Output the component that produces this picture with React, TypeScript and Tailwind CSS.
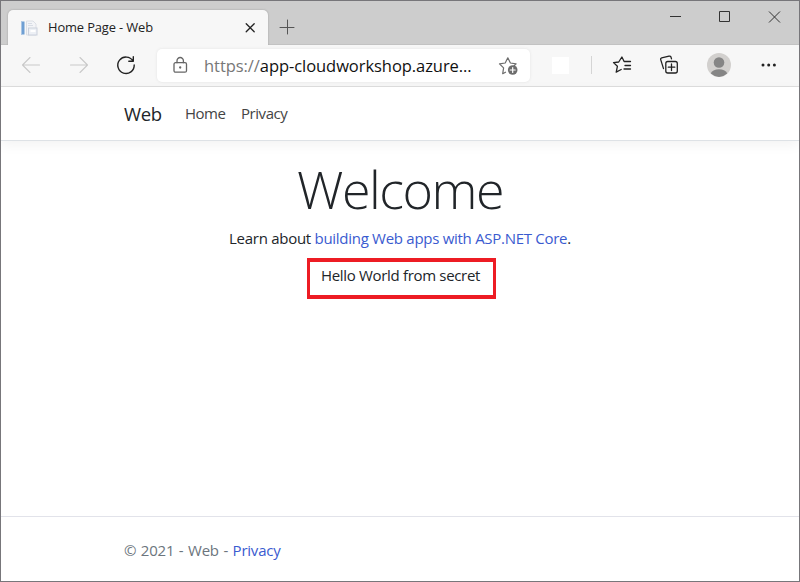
import type { ReactNode, SVGProps } from 'react';

function Icon({ children, ...props }: SVGProps<SVGSVGElement> & { children: ReactNode }) {
  return (
    <svg fill="none" stroke="currentColor" strokeWidth="1.3" strokeLinecap="round" strokeLinejoin="round" {...props}>
      {children}
    </svg>
  );
}

function TitleBar() {
  return (
    <div className="flex h-11 shrink-0 items-start bg-[#cdcdcd] pl-[7px] shadow-[inset_0_-1px_0_#c2c2c2]">
      <div className="mt-[9px] flex h-[35px] w-[260px] items-center rounded-t-[5px] bg-[#f7f7f7] pl-3 shadow-[0_0_2px_#999] [clip-path:inset(-3px_-3px_0_-3px)]">
        <svg width="18" height="18" viewBox="0 0 18 18" className="shrink-0">
          <rect x="1" y="2.500" width="3.500" height="13" fill="#6f9fd3" />
          <rect x="1" y="2.500" width="1" height="13" fill="#a9c6e5" />
          <path d="M6.500 2h6.500l3 3V16H6.500z" fill="#f3f4f7" stroke="#dcdfe5" />
          <path d="M8 4.500h4M8 6.500h5" stroke="#d8dde5" />
          <rect x="8.500" y="9" width="8.500" height="7" fill="#edf0f5" stroke="#cbd1dc" />
          <path d="M10.500 12h5" stroke="#fff" strokeWidth="2" />
        </svg>
        <span className="ml-[10px] w-[192px] shrink-0 text-[12.900px] tracking-[-0.120px] text-[#222]">Home Page - Web</span>
        <Icon width="20" height="20" viewBox="0 0 20 20" className="-mt-px shrink-0 text-[#222]">
          <path d="M6.200 6.700l8 8M14.200 6.700l-8 8" />
        </Icon>
      </div>
      <Icon width="18" height="18" viewBox="0 0 18 18" strokeWidth="1" className="ml-[10px] mt-[17px] text-[#555]">
        <path d="M2 9.500h14M9.500 2v14" />
      </Icon>
      <Icon width="115" height="18" viewBox="0 0 115 18" strokeWidth="1" className="ml-auto mr-[16px] mt-[7px] text-[#333]" strokeLinecap="butt" strokeLinejoin="miter">
        <path d="M2 8.500h11M51.500 3.500h10v10h-10zM101 3.500l11 11M112 3.500l-11 11" />
      </Icon>
    </div>
  );
}

function Toolbar() {
  return (
    <div className="flex h-[42px] shrink-0 items-center border-b border-[#dedede] bg-[#f7f7f7] pb-px pl-[18px]">
      <Icon width="24" height="24" viewBox="0 0 24 24" strokeWidth="1.100" className="text-[#c9c9c9]">
        <path d="M20.500 12H4M11 4.500L3.500 12l7.500 7.500" />
      </Icon>
      <Icon width="24" height="24" viewBox="0 0 24 24" strokeWidth="1.100" className="ml-6 text-[#c9c9c9]">
        <path d="M3.500 12H20M13 4.500l7.500 7.500-7.500 7.500" />
      </Icon>
      <Icon width="24" height="24" viewBox="0 0 24 24" strokeWidth="1.400" className="ml-[23px] text-[#222]">
        <path d="M19 8A8.200 8.200 0 1 0 20.200 12M19.300 3.800v4.500h-4.500" />
      </Icon>
      <div className="ml-[19px] mt-px flex h-[33px] w-[373px] shrink-0 items-center rounded-[5px] bg-white shadow-[0_0_3px_#e2e2e2]">
        <Icon width="18" height="20" viewBox="0 0 18 20" className="ml-[14px] shrink-0 text-[#666]">
          <rect x="3" y="6.700" width="12.500" height="9.500" rx="1.500" />
          <path d="M6 6.700V4.700a3.200 3.200 0 0 1 6.400 0v2" />
          <circle cx="9.200" cy="11.500" r=".5" fill="currentColor" />
        </Icon>
        <span className="ml-[15px] w-[294px] shrink-0 whitespace-nowrap pt-px text-[16.500px] tracking-[-0.060px] text-[#111]">
          <span className="text-[#777]">https://</span>app-cloudworkshop.azure...
        </span>
        <Icon width="22" height="22" viewBox="0 0 22 22" strokeWidth="1.200" className="shrink-0 text-[#6c6c6c]">
          <path d="M7.500 17.200l-2.800 1.500.9-5.800-4.100-4 5.700-.9L9.800 2.800 12.400 8l5.700.9-2 1.900" />
          <circle cx="14.700" cy="15" r="4.800" fill="currentColor" stroke="none" />
          <path d="M12.200 15h5M14.700 12.500v5" stroke="white" />
        </Icon>
      </div>
      <div className="ml-[22px] h-[17px] w-[17px] bg-white" />
      <div className="ml-[22px] h-[18px] w-px bg-[#d5d5d5]" />
      <Icon width="22" height="22" viewBox="0 0 22 22" className="ml-[20px] text-[#222]">
        <path d="M9.200 15.500l-5 2.600 1.200-5.800L1.500 8.600l5.200-.6L9.900 3l2.200 4.500h6.400M13 11.500h5.500M12 15h6.500" />
      </Icon>
      <Icon width="22" height="22" viewBox="0 0 22 22" className="ml-[25px] text-[#222]">
        <rect x="6.800" y="7.500" width="11.500" height="11.500" rx="2" />
        <path d="M9.300 13.200h6.500M12.500 10v6.500M4.500 14.600L1.700 5.600q-.4-1.400 1-1.800l7.300-1.700q1.500-.3 2 1l.5 1.800" />
      </Icon>
      <svg width="24" height="24" viewBox="0 0 24 24" className="ml-[26px]">
        <circle cx="12" cy="12" r="12" fill="#d2d0ce" />
        <circle cx="12" cy="9.500" r="5.300" fill="#858585" />
        <path d="M3.800 20.500a8.300 5 0 0 1 16.400 0q-8.200 7-16.400 0" fill="#858585" />
      </svg>
      <svg width="18" height="6" viewBox="0 0 18 6" className="ml-[29px] text-[#222]" fill="currentColor">
        <circle cx="3" cy="3" r="1.500" /><circle cx="8.700" cy="3" r="1.500" /><circle cx="14.400" cy="3" r="1.500" />
      </svg>
    </div>
  );
}

export default function App() {
  return (
    <div className="flex h-[582px] w-[800px] flex-col overflow-hidden border border-[#77767a] bg-white font-['Open_Sans','Noto_Sans',sans-serif] text-[15px] text-[#212529]">
      <TitleBar />
      <Toolbar />
      <nav className="flex h-[54px] shrink-0 items-center whitespace-nowrap border-b border-[#dee2e6] pl-[123px] shadow-[0_4px_12px_rgba(0,0,0,0.05)]">
        <span className="w-[61px] text-[18.500px] tracking-[-0.300px]">Web</span>
        <span className="w-14 tracking-[-0.500px] text-[#444]">Home</span>
        <span className="tracking-[-0.450px] text-[#444]">Privacy</span>
      </nav>
      <main className="flex flex-1 flex-col items-center whitespace-nowrap pt-[17px]">
        <h1 className="h-[66px] text-[52px] font-light leading-[62px] tracking-[-1.500px]">Welcome</h1>
        <p className="mt-0.5 h-6 leading-6 tracking-[-0.280px]">
          Learn about <a className="text-[#3a5bd0]">building Web apps with ASP.NET Core</a>.
        </p>
        <div className="ml-[3px] mt-2 flex h-[41px] w-[189px] justify-center border-x-[3px] border-y-4 border-[#ed1c24] pr-0.5 pt-px">
          <p className="leading-6 tracking-[-0.320px]">Hello World from secret</p>
        </div>
      </main>
      <footer className="flex h-[65px] shrink-0 items-center whitespace-pre border-t border-[#e2e3ea] pl-[123px] pt-[3px] tracking-[-0.220px] text-[#6c757d] [word-spacing:0.900px]">
        © 2021 - Web - <a className="text-[#3a5bd0]">Privacy</a>
      </footer>
    </div>
  );
}
